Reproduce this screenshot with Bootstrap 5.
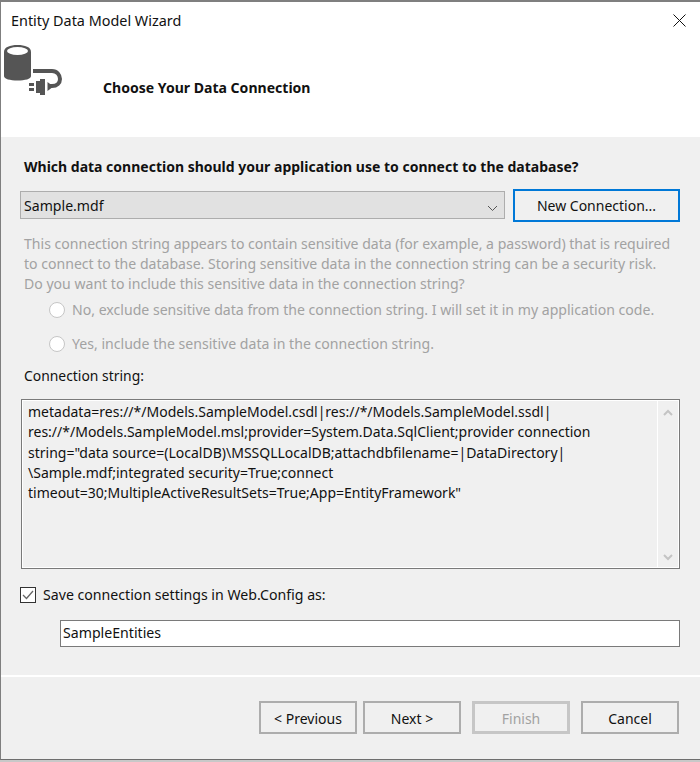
<!DOCTYPE html>
<html lang="en">
<head>
<meta charset="utf-8">
<title>Entity Data Model Wizard</title>
<link href="https://cdn.jsdelivr.net/npm/bootstrap@5.3.0/dist/css/bootstrap.min.css" rel="stylesheet">
<style>
html,body{margin:0;height:762px;overflow:hidden;background:#c8c8c8;}
body{font-family:"Noto Sans","Open Sans",sans-serif;font-size:14px;line-height:20px;color:#111;}
.wiz{width:700px;height:760px;border-top:2px solid #7f7f7f;border-left:1px solid #7f7f7f;border-bottom:1px solid #6e6e6e;background:#f0f0f0;display:flex;flex-direction:column;}
.wiz-head{height:135px;background:#fff;flex:none;}
.wiz-title{height:38px;padding:9px 0 0 10px;font-size:14.4px;}
.wiz-x{margin:12px 14px 0 0;}
.wiz-sub{padding-left:3px;gap:39px;height:60px;}
.wiz-h{font-weight:700;font-size:14.05px;margin-top:38px;}
.wiz-body{flex:1;padding:20px 19px 0 19px;}
.wiz-q{font-weight:700;font-size:14px;padding-left:4px;height:20px;}
.combo-row{margin-top:12px;gap:8px;height:33px;}
.combo{width:485px;height:28px;margin-top:2px;background:#e1e1e1;border:1px solid #adadad;padding:4px 0 0 3px;font-size:14.1px;display:flex;justify-content:space-between;}
.combo svg{margin:9px 6px 0 0;}
.new-btn{width:167px;height:33px;border:2px solid #0078d7;padding:5px 0 0;background:#f0f0f0;text-align:center;font-size:14px;}
.dim{color:#a2a2a2;}
.warn{margin-top:12px;padding-left:4px;font-size:14.07px;}
.opt{gap:7px;height:20px;padding-left:29px;font-size:14.1px;}
.opt-a{margin-top:6px;}
.opt-b{margin-top:14px;}
.ring{width:16px;height:16px;border:1px solid #c6c6c6;border-radius:50%;background:#fff;flex:none;}
.cs-label{margin-top:12px;padding-left:4px;font-size:13.9px;}
.cs-box{margin:13px 0 0 1px;width:659px;height:170px;border:1px solid #7a7a7a;display:flex;}
.cs-text{flex:1;padding:1px 0 0 5px;line-height:20.25px;font-size:14px;border:1px solid #fff;border-right:0;}
.cs-bar{width:22px;border:1px solid #fff;display:flex;flex-direction:column;justify-content:space-between;align-items:center;padding:8px 0 6px;}
.save{margin-top:16px;height:20px;gap:7px;font-size:14.15px;}
.chk{width:16px;height:16px;border:1px solid #333;background:#fff;flex:none;display:flex;align-items:center;justify-content:center;}
.name-in{margin:15px 0 0 40px;width:620px;height:27px;border:1px solid #7a7a7a;background:#fff;padding:2px 0 0 2px;font-size:14.15px;}
.sep{border-top:2px solid #fff;flex:none;}
.wiz-foot{height:82px;flex:none;padding:24px 20px 0 258px;}
.wbtn{width:98px;height:33px;border:2px solid #adadad;background:#f0f0f0;text-align:center;padding:6px 0 0;font-size:14px;color:#111;}
.wbtn-off{border-width:3px;border-color:#c6c6c6;color:#a2a2a2;padding-top:5px;}
.g6{margin-left:6px;}
.g11{margin-left:11px;}
</style>
</head>
<body>
<div class="wiz">
  <div class="wiz-head">
    <div class="d-flex justify-content-between">
      <div class="wiz-title">Entity Data Model Wizard</div>
      <svg class="wiz-x" width="13" height="13" viewBox="0 0 13 13" fill="none" stroke="#111" stroke-width="1"><path d="M.5.5l12 12M12.5.5l-12 12"/></svg>
    </div>
    <div class="d-flex wiz-sub">
      <svg width="60" height="56" viewBox="0 0 60 56">
        <path d="M0 12C0 7 6 5 13.500 5S27 7 27 12v24c0 3-6 4.500-13.500 4.500S0 39 0 36z" fill="#555"/>
        <ellipse cx="13.500" cy="11" rx="10.500" ry="4" fill="#fff"/>
        <path d="M29 31h19c5 0 8 4 8 8s-3 7-8 7h-2" fill="none" stroke="#555" stroke-width="4"/>
        <path d="M32 41h4v-2h5v16h-5v-2h-4zM43.500 42l4 3v3l-4 3zM25 43h5v3h-5zM25 48h5v3h-5z" fill="#555"/>
      </svg>
      <div class="wiz-h">Choose Your Data Connection</div>
    </div>
  </div>
  <div class="wiz-body">
    <div class="wiz-q">Which data connection should your application use to connect to the database?</div>
    <div class="d-flex combo-row">
      <div class="combo"><span>Sample.mdf</span><svg width="11" height="7" viewBox="0 0 11 7" fill="none" stroke="#555"><path d="M1 1l4.500 4.500L10 1"/></svg></div>
      <div class="new-btn">New Connection...</div>
    </div>
    <div class="warn dim">This connection string appears to contain sensitive data (for example, a password) that is required<br>to connect to the database. Storing sensitive data in the connection string can be a security risk.<br>Do you want to include this sensitive data in the connection string?</div>
    <div class="d-flex align-items-center opt opt-a dim"><span class="ring"></span><span>No, exclude sensitive data from the connection string. I will set it in my application code.</span></div>
    <div class="d-flex align-items-center opt opt-b dim"><span class="ring"></span><span>Yes, include the sensitive data in the connection string.</span></div>
    <div class="cs-label">Connection string:</div>
    <div class="cs-box">
      <div class="cs-text">metadata=res://*/Models.SampleModel.csdl|res://*/Models.SampleModel.ssdl|<br>res://*/Models.SampleModel.msl;provider=System.Data.SqlClient;provider connection<br>string="data source=(LocalDB)\MSSQLLocalDB;attachdbfilename=|DataDirectory|<br>\Sample.mdf;integrated security=True;connect<br>timeout=30;MultipleActiveResultSets=True;App=EntityFramework"</div>
      <div class="cs-bar">
        <svg width="10" height="7" viewBox="0 0 10 7" fill="none" stroke="#c4c4c4" stroke-width="2"><path d="M1 6l4-4 4 4"/></svg>
        <svg width="10" height="7" viewBox="0 0 10 7" fill="none" stroke="#c4c4c4" stroke-width="2"><path d="M1 1l4 4 4-4"/></svg>
      </div>
    </div>
    <div class="d-flex align-items-center save">
      <span class="chk"><svg width="12" height="10" viewBox="0 0 12 10" fill="none" stroke="#666" stroke-width="1.300"><path d="M1 5l3.500 3.500L11 1"/></svg></span>
      <span>Save connection settings in Web.Config as:</span>
    </div>
    <div class="name-in">SampleEntities</div>
  </div>
  <div class="sep"></div>
  <div class="wiz-foot d-flex">
    <div class="wbtn">&lt; Previous</div>
    <div class="wbtn g6">Next &gt;</div>
    <div class="wbtn wbtn-off g11">Finish</div>
    <div class="wbtn g11">Cancel</div>
  </div>
</div>
</body>
</html>
